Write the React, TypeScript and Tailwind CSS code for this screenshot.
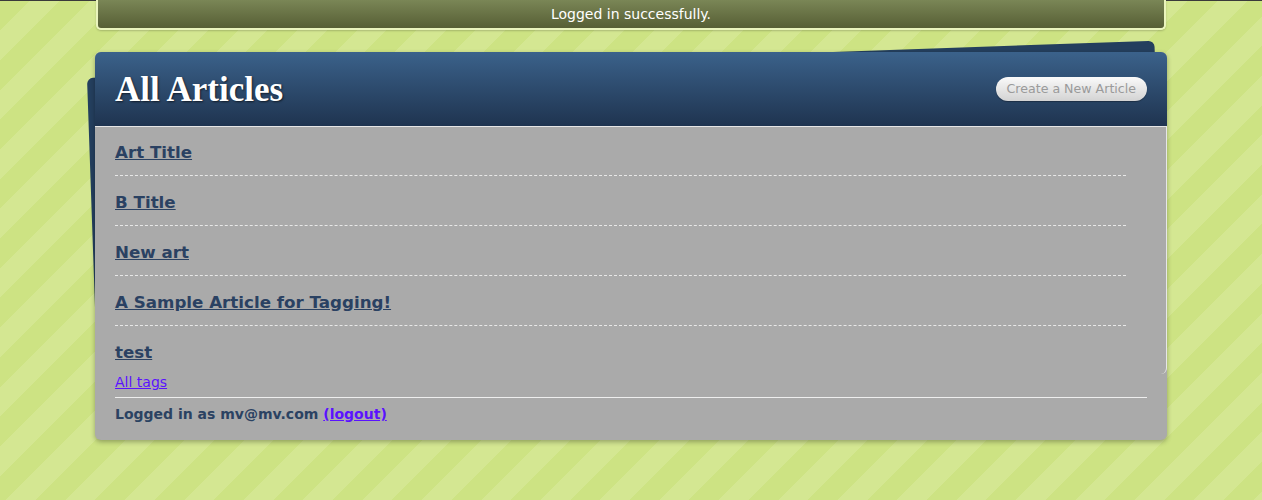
import React from "react"

const articles = ["Art Title", "B Title", "New art", "A Sample Article for Tagging!", "test"]

export default function App() {
    return (
        <div
            className="min-h-[500px] w-full border-t border-[#3a3a3a] font-['DejaVu_Sans',Verdana,sans-serif] bg-[repeating-linear-gradient(135deg,#cde383_0px,#cde383_21px,#d4e792_21px,#d4e792_42px)]"
        >
            <div className="mx-auto w-[1072px]">
                {/* flash message */}
                <div className="mx-px -mt-px h-[30px] rounded-b-[5px] border-x-2 border-b-2 border-[#eaf4bd] bg-gradient-to-b from-[#7a8656] to-[#575f35] flex items-center justify-center text-white text-[14px] shadow-[0_1px_2px_rgba(0,0,0,0.2)]">
                    Logged in successfully.
                </div>

                <div className="relative mt-[22px]">
                    {/* tilted card behind */}
                    <div className="absolute left-[-8px] top-[26px] w-[1068px] h-[280px] rounded-[6px] bg-[#243f5e] origin-top-left -rotate-2" />

                    <div className="relative rounded-[6px] bg-[#aaaaaa] shadow-[0_2px_5px_rgba(0,0,0,0.3)]">
                        <div className="h-[74px] rounded-t-[6px] bg-gradient-to-b from-[#3b628b] to-[#1f3450] flex items-center justify-between pl-5 pr-5">
                            <h1 className="font-['Liberation_Serif',serif] font-bold text-[35px] text-white [text-shadow:1px_1px_2px_rgba(0,0,0,0.6)] leading-none">
                                All Articles
                            </h1>
                            <button className="h-[24px] px-[11px] rounded-full bg-gradient-to-b from-[#fafafa] to-[#d3d3d3] text-[#9a9a9a] text-[12.6px] shadow-[0_1px_1px_rgba(0,0,0,0.3)]">
                                Create a New Article
                            </button>
                        </div>

                        <div className="border-t border-r border-[#e6e6e6] rounded-br-[6px] pl-5 pr-10 pt-[14px] pb-[11px]">
                            <ul className="flex flex-col gap-[15px]">
                                {articles.map((a, i) => (
                                    <li
                                        key={a}
                                        className={
                                            i < articles.length - 1
                                                ? "h-[35px] border-b border-dashed border-[#e8e8e8] text-[16.7px] leading-[22px]"
                                                : "h-[22px] text-[16.7px] leading-[22px]"
                                        }
                                    >
                                        <a href="#" className="font-bold text-[#2a4162] underline">
                                            {a}
                                        </a>
                                    </li>
                                ))}
                            </ul>
                        </div>

                        <div className="px-5 pb-[17px]">
                            <a href="#" className="block text-[14px] text-[#5a12ff] underline leading-[16px]">
                                All tags
                            </a>
                            <div className="mt-[7px] border-t border-[#eeeeee]" />
                            <p className="pt-[7px] text-[14px] font-bold text-[#2b4262] leading-[18px]">
                                Logged in as mv@mv.com{" "}
                                <a href="#" className="text-[#5a12ff] underline">
                                    (logout)
                                </a>
                            </p>
                        </div>
                    </div>
                </div>
            </div>
        </div>
    )
}
